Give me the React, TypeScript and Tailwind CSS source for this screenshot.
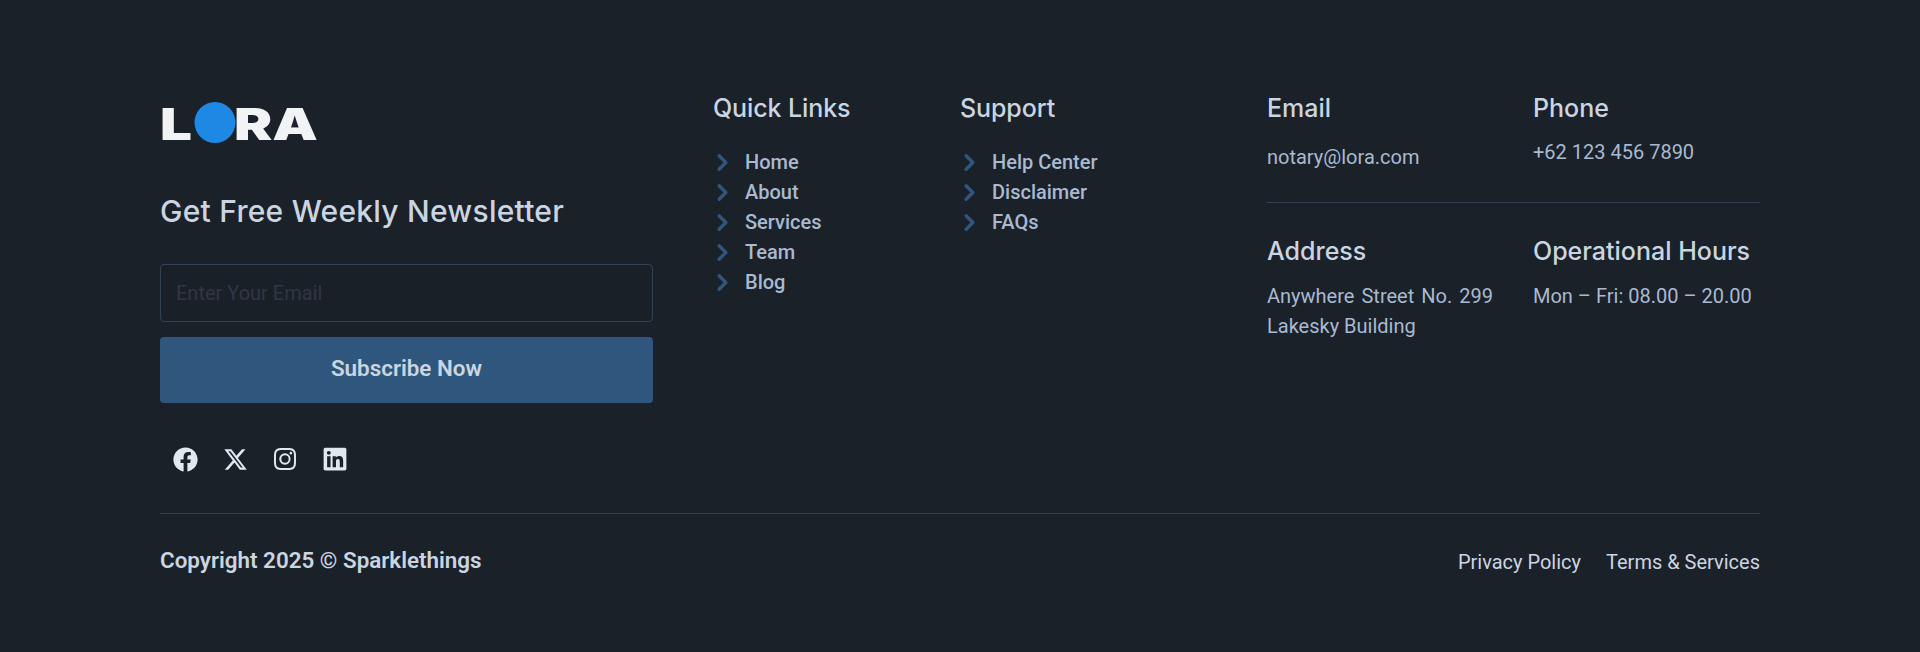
import React from 'react';
import { ChevronRight } from 'lucide-react';
import { FaFacebook, FaLinkedin } from 'react-icons/fa';
import { FaXTwitter } from 'react-icons/fa6';
import { BsInstagram } from 'react-icons/bs';

const quickLinks = ['Home', 'About', 'Services', 'Team', 'Blog'];
const supportLinks = ['Help Center', 'Disclaimer', 'FAQs'];

const Logo = () => (
  <svg width="158" height="42" viewBox="0 0 158 42" className="block overflow-visible">
    <text x="0" y="38" textLength="32" lengthAdjust="spacingAndGlyphs" fontFamily="Inter" fontWeight="900" fontSize="44" fill="#f1f3f4">L</text>
    <text x="74" y="38" textLength="84" lengthAdjust="spacingAndGlyphs" fontFamily="Inter" fontWeight="900" fontSize="44" fill="#f1f3f4">RA</text>
    <circle cx="55" cy="20.5" r="20.5" fill="#1e88e5" />
  </svg>
);

const LinkList = ({ title, links }: { title: string; links: string[] }) => (
  <div>
    <h4 className="font-['Inter'] text-[25px] leading-[32px] font-medium tracking-[-0.1px] text-[#cbd5e1]">{title}</h4>
    <ul className="mt-[23px] flex flex-col">
      {links.map((link) => (
        <li key={link} className="flex h-[30px] items-center gap-[9px] text-[20px] font-medium text-[#a9b9d0]">
          <ChevronRight className="-ml-[4px] h-[27px] w-[27px] text-[#2f577d]" strokeWidth={3} />
          <span>{link}</span>
        </li>
      ))}
    </ul>
  </div>
);

export default function App() {
  return (
    <footer className="h-[652px] bg-[#1a2129] pt-[92px] font-['Roboto',sans-serif]">
      <div className="mx-auto w-[1600px]">
        <div className="flex h-[422px] items-start border-b border-[#334155]">
          <div className="w-[493px]">
            <div className="pt-[10px]">
              <Logo />
            </div>
            <h3 className="mt-[47px] font-['Inter'] text-[30px] leading-[40px] font-medium tracking-[0.25px] text-[#cbd5e1]">Get Free Weekly Newsletter</h3>
            <input
              className="mt-[33px] block h-[58px] w-full rounded border border-[#334155] bg-[#1a2028] px-[15px] text-[20px] outline-none placeholder:text-[#313646]"
              placeholder="Enter Your Email"
            />
            <button className="mt-[15px] block h-[66px] w-full rounded bg-[#2f577d] pb-[2px] text-[22.4px] font-semibold text-[#cbd5e1]">Subscribe Now</button>
            <div className="mt-[43px] ml-[13px] flex items-center gap-[26px] text-[#e2e8f0]">
              <span className="flex w-6 justify-center"><FaFacebook className="h-[25px] w-[25px] shrink-0" /></span>
              <span className="flex w-6 justify-center"><FaXTwitter className="h-[25px] w-[25px] shrink-0" /></span>
              <span className="flex w-6 justify-center"><BsInstagram className="h-[22px] w-[22px] shrink-0" /></span>
              <span className="flex w-6 justify-center"><FaLinkedin className="h-[26px] w-[26px] shrink-0" /></span>
            </div>
          </div>
          <div className="ml-[60px] w-[247px]">
            <LinkList title="Quick Links" links={quickLinks} />
          </div>
          <div className="w-[307px]">
            <LinkList title="Support" links={supportLinks} />
          </div>
          <div className="w-[493px]">
            <div className="flex h-[111px] gap-[40px] border-b border-[#334155]">
              <div className="w-[226px]">
                <h4 className="font-['Inter'] text-[25px] leading-[32px] font-medium text-[#cbd5e1]">Email</h4>
                <p className="mt-[18px] text-[20px] leading-[30px] text-[#a9b9d0]">notary@lora.com</p>
              </div>
              <div className="w-[227px]">
                <h4 className="font-['Inter'] text-[25px] leading-[32px] font-medium text-[#cbd5e1]">Phone</h4>
                <p className="mt-[13px] text-[20px] leading-[30px] text-[#a9b9d0]">+62 123 456 7890</p>
              </div>
            </div>
            <div className="mt-[32px] flex gap-[40px]">
              <div className="w-[226px]">
                <h4 className="font-['Inter'] text-[25px] leading-[32px] font-medium text-[#cbd5e1]">Address</h4>
                <p className="mt-[14px] text-justify text-[20px] leading-[30px] text-[#a9b9d0]">Anywhere Street No. 299 Lakesky Building</p>
              </div>
              <div className="w-[227px]">
                <h4 className="font-['Inter'] text-[25px] leading-[32px] font-medium whitespace-nowrap text-[#cbd5e1]">Operational Hours</h4>
                <p className="mt-[14px] text-[20px] leading-[30px] whitespace-nowrap text-[#a9b9d0]">Mon – Fri: 08.00 – 20.00</p>
              </div>
            </div>
          </div>
        </div>
        <div className="flex items-start justify-between pt-[30px]">
          <p className="text-[22.4px] leading-[32px] font-semibold text-[#cbd5e1]">Copyright 2025 © Sparklethings</p>
          <div className="flex gap-[25px] pt-[4px] text-[20px] leading-[28px] text-[#cbd5e1]">
            <a>Privacy Policy</a>
            <a>Terms &amp; Services</a>
          </div>
        </div>
      </div>
    </footer>
  );
}
